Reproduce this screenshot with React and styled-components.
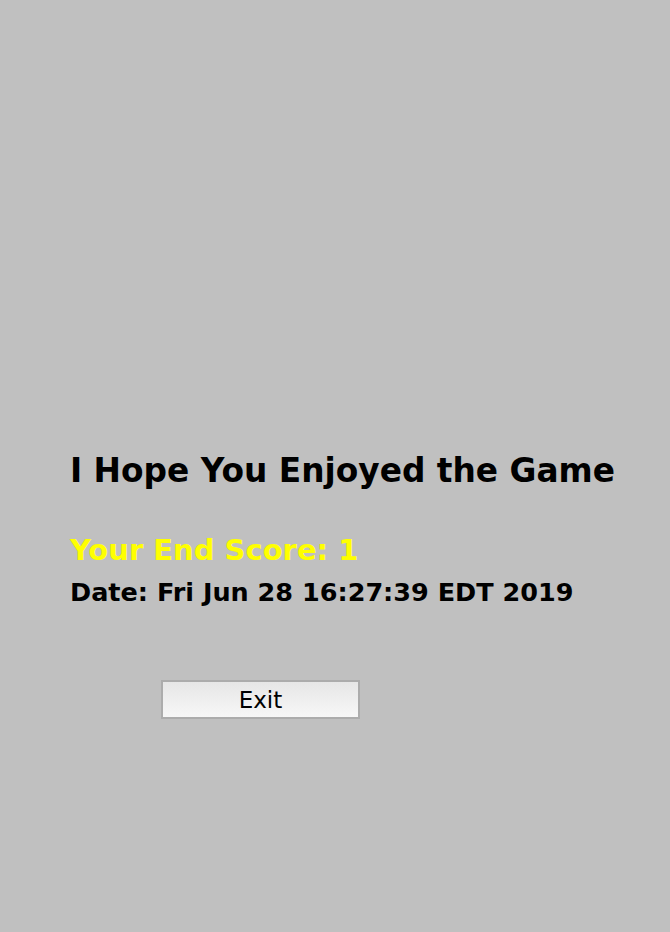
import React from "react";
import styled, { createGlobalStyle } from "styled-components";

const Global = createGlobalStyle`
  html, body { margin: 0; padding: 0; background: #c0c0c0; }
  body { font-family: "DejaVu Sans", "Liberation Sans", sans-serif; }
`;

const Page = styled.div`
  width: 670px;
  height: 932px;
  background: #c0c0c0;
  box-sizing: border-box;
  padding: 451px 0 0 70px;
  display: flex;
  flex-direction: column;
`;

const Title = styled.h1`
  margin: 0;
  font-size: 32.8px;
  line-height: 40px;
  font-weight: bold;
  color: #000;
  white-space: nowrap;
`;

const Line = styled.div`
  margin: ${(p) => p.$top}px 0 0 0;
  font-size: ${(p) => p.$size}px;
  line-height: ${(p) => p.$lh}px;
  font-weight: bold;
  color: ${(p) => p.$color};
  white-space: nowrap;
`;

const ButtonRow = styled.div`
  margin-top: 72px;
  padding-left: 91px;
`;

const ExitButton = styled.button`
  width: 199px;
  height: 39px;
  box-sizing: border-box;
  border: 2px solid #acacac;
  background: linear-gradient(#e6e6e6, #f7f7f7);
  font-family: "DejaVu Sans", sans-serif;
  font-size: 23px;
  color: #000;
  padding: 0;
  cursor: pointer;
`;

export default function App() {
  return (
    <>
      <Global />
      <Page>
        <Title>I Hope You Enjoyed the Game</Title>
        <Line $top={41} $size={29} $lh={36} $color="#ffff00">Your End Score: 1</Line>
        <Line $top={8} $size={25.5} $lh={32} $color="#000">Date: Fri Jun 28 16:27:39 EDT 2019</Line>
        <ButtonRow>
          <ExitButton>Exit</ExitButton>
        </ButtonRow>
      </Page>
    </>
  );
}
